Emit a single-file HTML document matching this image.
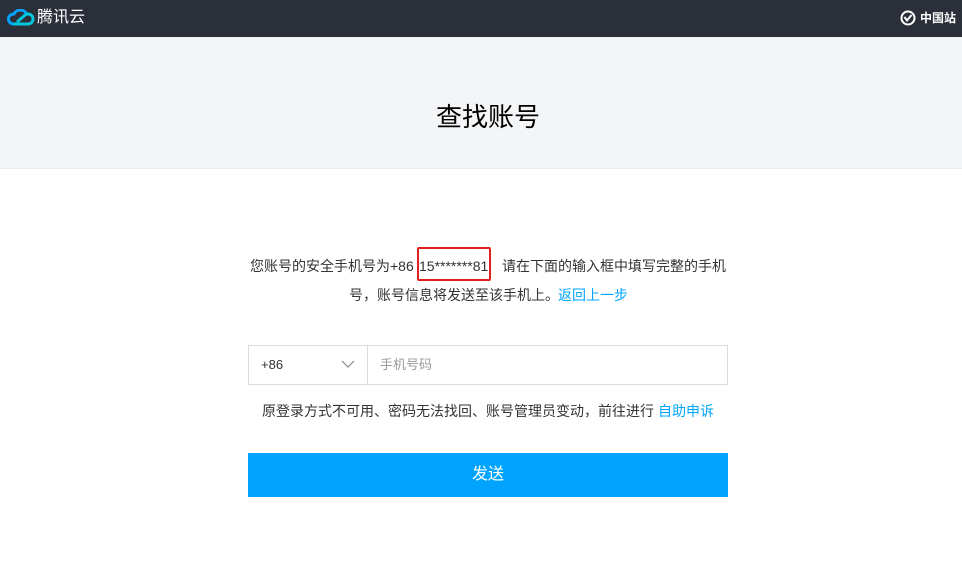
<!DOCTYPE html>
<html><head><meta charset="utf-8"><style>
*{margin:0;padding:0;box-sizing:border-box}
body{width:962px;height:584px;overflow:hidden;background:#fff;font-family:"Liberation Sans","Noto Sans CJK SC",sans-serif;color:#333;position:relative}
.top{position:absolute;left:0;top:0;width:962px;height:37px;background:#2b2f3a}
.hero{position:absolute;left:0;top:37px;width:962px;height:132px;background:#f4f5f7;border-bottom:1px solid #eceef1}
.hero h1{position:absolute;left:7px;width:962px;top:62px;text-align:center;font-size:26px;font-weight:normal;color:#000;line-height:36px}
.abs{position:absolute;white-space:nowrap}
.t{font-size:14px;line-height:20px}
</style></head><body>
<div class="top">
<svg class="abs" style="left:7px;top:9px" width="28" height="18" viewBox="0 0 28 18"><path d="M6 15 a5 5 0 0 1 1-10 a7 7 0 0 1 13 1" fill="none" stroke="#00a4ff" stroke-width="3"/><path d="M6 15 L21 15 a5 5 0 0 0 0-10 a5 5 0 0 0-4 2 L10 13" fill="none" stroke="#00c8dc" stroke-width="3"/></svg>
<div class="abs" style="left:37px;top:7px;font-size:16px;color:#fff;line-height:22px">腾讯云</div>
<svg class="abs" style="left:900px;top:10px" width="16" height="16" viewBox="0 0 16 16"><circle cx="8" cy="8" r="6.5" fill="none" stroke="#fff" stroke-width="2"/><path d="M4.5 7 L7 10.5 L11.5 5" fill="none" stroke="#fff" stroke-width="2"/></svg>
<div class="abs" style="left:920px;top:10px;font-size:12px;color:#fff;font-weight:bold;line-height:16px">中国站</div>
</div>
<div class="hero"><h1>查找账号</h1></div>
<div class="abs t" style="left:250px;top:256px">您账号的安全手机号为+86</div>
<div class="abs t" style="left:419px;top:256px">15*******81</div>
<div class="abs t" style="left:502px;top:256px">请在下面的输入框中填写完整的手机</div>
<div class="abs" style="left:417px;top:247px;width:74px;height:34px;border:2px solid #e02020;border-radius:2px"></div>
<div class="abs t" style="left:349px;top:285px">号，账号信息将发送至该手机上。</div>
<div class="abs t" style="left:558px;top:285px;color:#00a4ff">返回上一步</div>
<div class="abs" style="left:248px;top:345px;width:480px;height:40px;border:1px solid #dcdcdc"></div>
<div class="abs" style="left:367px;top:346px;width:1px;height:38px;background:#dcdcdc"></div>
<div class="abs" style="left:261px;top:356px;font-size:13px;line-height:18px">+86</div>
<svg class="abs" style="left:341px;top:360px" width="14" height="8" viewBox="0 0 14 8"><path d="M1 1 L7 7 L13 1" fill="none" stroke="#888" stroke-width="1.2"/></svg>
<div class="abs" style="left:380px;top:356px;font-size:13px;line-height:18px;color:#999">手机号码</div>
<div class="abs t" style="left:262px;top:401px">原登录方式不可用、密码无法找回、账号管理员变动，前往进行</div>
<div class="abs t" style="left:658px;top:401px;color:#00a4ff">自助申诉</div>
<div class="abs" style="left:248px;top:453px;width:480px;height:44px;background:#00a4ff;color:#fff;font-size:16px;text-align:center;line-height:44px">发送</div>
</body></html>
